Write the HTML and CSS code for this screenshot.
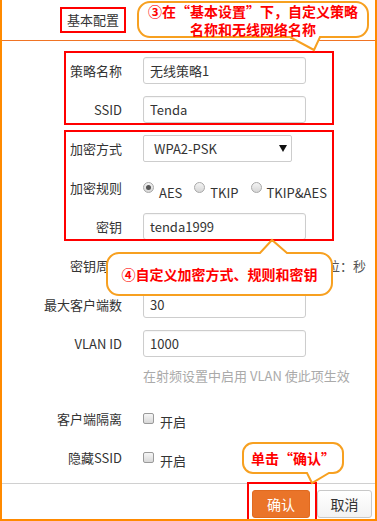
FILE: index.html
```html
<!DOCTYPE html>
<html lang="zh-CN">
<head>
    <meta charset="utf-8">
    <title>基本配置</title>
    <link rel="stylesheet" href="styles.css">
</head>
<body>
    <div class="page">
        <header class="head">
            <span class="head-title">基本配置</span>
        </header>

        <div class="form">
            <label class="lbl">策略名称</label>
            <div class="ctl"><span class="field">无线策略1</span></div>

            <label class="lbl">SSID</label>
            <div class="ctl"><span class="field">Tenda</span></div>

            <label class="lbl">加密方式</label>
            <div class="ctl"><span class="select">WPA2-PSK<i class="caret"></i></span></div>

            <label class="lbl">加密规则</label>
            <div class="ctl radios">
                <span class="opt"><i class="radio on"></i><span class="opt-text">AES</span></span>
                <span class="opt"><i class="radio"></i><span class="opt-text">TKIP</span></span>
                <span class="opt"><i class="radio"></i><span class="opt-text">TKIP&amp;AES</span></span>
            </div>

            <label class="lbl">密钥</label>
            <div class="ctl"><span class="field">tenda1999</span></div>

            <label class="lbl">密钥周期</label>
            <div class="ctl"><span class="field">3600</span><span class="unit">单位：秒</span></div>

            <label class="lbl">最大客户端数</label>
            <div class="ctl"><span class="field">30</span></div>

            <label class="lbl">VLAN ID</label>
            <div class="ctl"><span class="field">1000</span></div>

            <div class="hint">在射频设置中启用 VLAN 使此项生效</div>

            <label class="lbl spaced">客户端隔离</label>
            <div class="ctl spaced"><span class="opt"><i class="check"></i><span class="chk-text">开启</span></span></div>

            <label class="lbl">隐藏SSID</label>
            <div class="ctl"><span class="opt"><i class="check"></i><span class="chk-text">开启</span></span></div>
        </div>

        <footer class="foot">
            <button class="btn btn-ok">确认</button>
            <button class="btn btn-cancel">取消</button>
        </footer>

        <!-- annotations -->
        <div class="mark mark-1"></div>
        <div class="mark mark-2"></div>
        <div class="mark mark-3"></div>

        <div class="callout c1">
            <svg class="bubble" width="236" height="54" viewBox="0 0 236 54">
                <path d="M14 2H220A12 12 0 0 1 232 14V25A12 12 0 0 1 220 37H184L178 50L154 37H14A12 12 0 0 1 2 25V14A12 12 0 0 1 14 2Z"/>
            </svg>
            <span class="callout-text">③在“基本设置”下，自定义策略<br>名称和无线网络名称</span>
        </div>

        <div class="callout c2">
            <svg class="bubble" width="230" height="60" viewBox="0 0 230 60">
                <path d="M14 15H155L167 2L182 15H215A12 12 0 0 1 227 27V45A12 12 0 0 1 215 57H14A12 12 0 0 1 2 45V27A12 12 0 0 1 14 15Z"/>
            </svg>
            <span class="callout-text">④自定义加密方式、规则和密钥</span>
        </div>

        <div class="callout c3">
            <svg class="bubble" width="104" height="44" viewBox="0 0 104 44">
                <path d="M12 2H92A10 10 0 0 1 102 12V22A10 10 0 0 1 92 32H88L71 42L66 32H12A10 10 0 0 1 2 22V12A10 10 0 0 1 12 2Z"/>
            </svg>
            <span class="callout-text">单击“确认”</span>
        </div>
    </div>
</body>
</html>
```

FILE: styles.css
```css
body {
    margin: 0;
    padding: 0;
    background: #fff;
    font-family: "Noto Sans CJK SC", "Noto Sans", sans-serif;
    font-size: 13px;
    color: #333;
}
.page {
    position: relative;
    width: 377px;
    height: 521px;
    box-sizing: border-box;
    border: 2px solid #ff8a00;
    border-top: none;
    overflow: hidden;
}
.head {
    height: 41px;
    box-sizing: border-box;
    padding: 7px 0 0 58px;
    border-bottom: 1px solid #f07424;
}
.head-title {
    display: inline-block;
    height: 26px;
    box-sizing: border-box;
    line-height: 22px;
    padding: 0 5px;
    border: 2px solid #f00;
    font-size: 13px;
    color: #333;
}
.form {
    display: grid;
    grid-template-columns: 120px 1fr;
    column-gap: 21px;
    row-gap: 12px;
    padding-top: 16px;
}
.lbl {
    height: 27px;
    display: flex;
    align-items: center;
    justify-content: flex-end;
    white-space: nowrap;
}
.ctl {
    height: 27px;
    display: flex;
    align-items: center;
}
.spaced {
    margin-top: 10px;
}
.field {
    width: 163px;
    height: 27px;
    box-sizing: border-box;
    border: 1px solid #cdcdcd;
    border-radius: 3px;
    padding: 0 6px;
    display: flex;
    align-items: center;
    box-shadow: inset 0 1px 1px rgba(0, 0, 0, 0.04);
    flex-shrink: 0;
}
.unit {
    margin-left: 8px;
    color: #555;
    white-space: nowrap;
}
.select {
    width: 149px;
    height: 27px;
    box-sizing: border-box;
    border: 1px solid #cdcdcd;
    border-radius: 2px;
    padding: 0 0 0 10px;
    display: flex;
    align-items: center;
    justify-content: space-between;
}
.caret {
    width: 0;
    height: 0;
    border-left: 4px solid transparent;
    border-right: 4px solid transparent;
    border-top: 7px solid #111;
    margin-right: 4px;
}
.radios {
    gap: 12px;
}
.opt {
    display: inline-flex;
    align-items: center;
    gap: 5px;
}
.opt-text {
    padding-top: 10px;
}
.chk-text {
    padding-top: 6px;
    margin-left: 1px;
}
.radio {
    width: 11px;
    height: 11px;
    box-sizing: border-box;
    border: 1px solid #a8a8a8;
    border-radius: 50%;
    background: linear-gradient(#f4f4f4, #d6d6d6);
    display: flex;
    align-items: center;
    justify-content: center;
}
.radio.on::after {
    content: "";
    width: 5px;
    height: 5px;
    border-radius: 50%;
    background: #555;
}
.check {
    width: 11px;
    height: 11px;
    box-sizing: border-box;
    border: 1px solid #9a9a9a;
    border-radius: 2px;
    background: linear-gradient(#f6f6f6, #d8d8d8);
}
.hint {
    grid-column: 2;
    height: 14px;
    line-height: 14px;
    color: #aaa;
    white-space: nowrap;
}
.foot {
    margin-top: 12px;
    border-top: 1px solid #d0d0d0;
    padding: 6px 3px 0 0;
    display: flex;
    justify-content: flex-end;
    gap: 7px;
}
.btn {
    height: 28px;
    border-radius: 3px;
    font-family: inherit;
    font-size: 14px;
    padding: 0;
    cursor: pointer;
}
.btn-ok {
    width: 58px;
    background: #ea7429;
    border: 1px solid #e06a20;
    color: #fff;
}
.btn-cancel {
    width: 55px;
    background: linear-gradient(#fff, #f2f2f2);
    border: 1px solid #c8c8c8;
    color: #333;
}
.mark {
    position: absolute;
    box-sizing: border-box;
    border: 2px solid #f00;
}
.mark-1 {
    left: 62px;
    top: 51px;
    width: 270px;
    height: 74px;
}
.mark-2 {
    left: 62px;
    top: 130px;
    width: 270px;
    height: 111px;
}
.mark-3 {
    left: 245px;
    top: 482px;
    width: 70px;
    height: 50px;
}
.callout {
    position: absolute;
    display: flex;
    align-items: center;
    justify-content: center;
    text-align: center;
}
.bubble {
    position: absolute;
    left: -2px;
    top: -2px;
    overflow: visible;
}
.bubble path {
    fill: #fff;
    stroke: #f7a020;
    stroke-width: 2;
}
.callout-text {
    position: relative;
    font-size: 14px;
    font-weight: bold;
    line-height: 18px;
    color: #f00;
    white-space: nowrap;
}
.c1 {
    left: 136px;
    top: 2px;
    width: 230px;
    height: 35px;
}
.c2 {
    left: 105px;
    top: 253px;
    width: 225px;
    height: 42px;
}
.c2 .bubble {
    top: -15px;
}
.c3 {
    left: 241px;
    top: 443px;
    width: 100px;
    height: 30px;
}
```
